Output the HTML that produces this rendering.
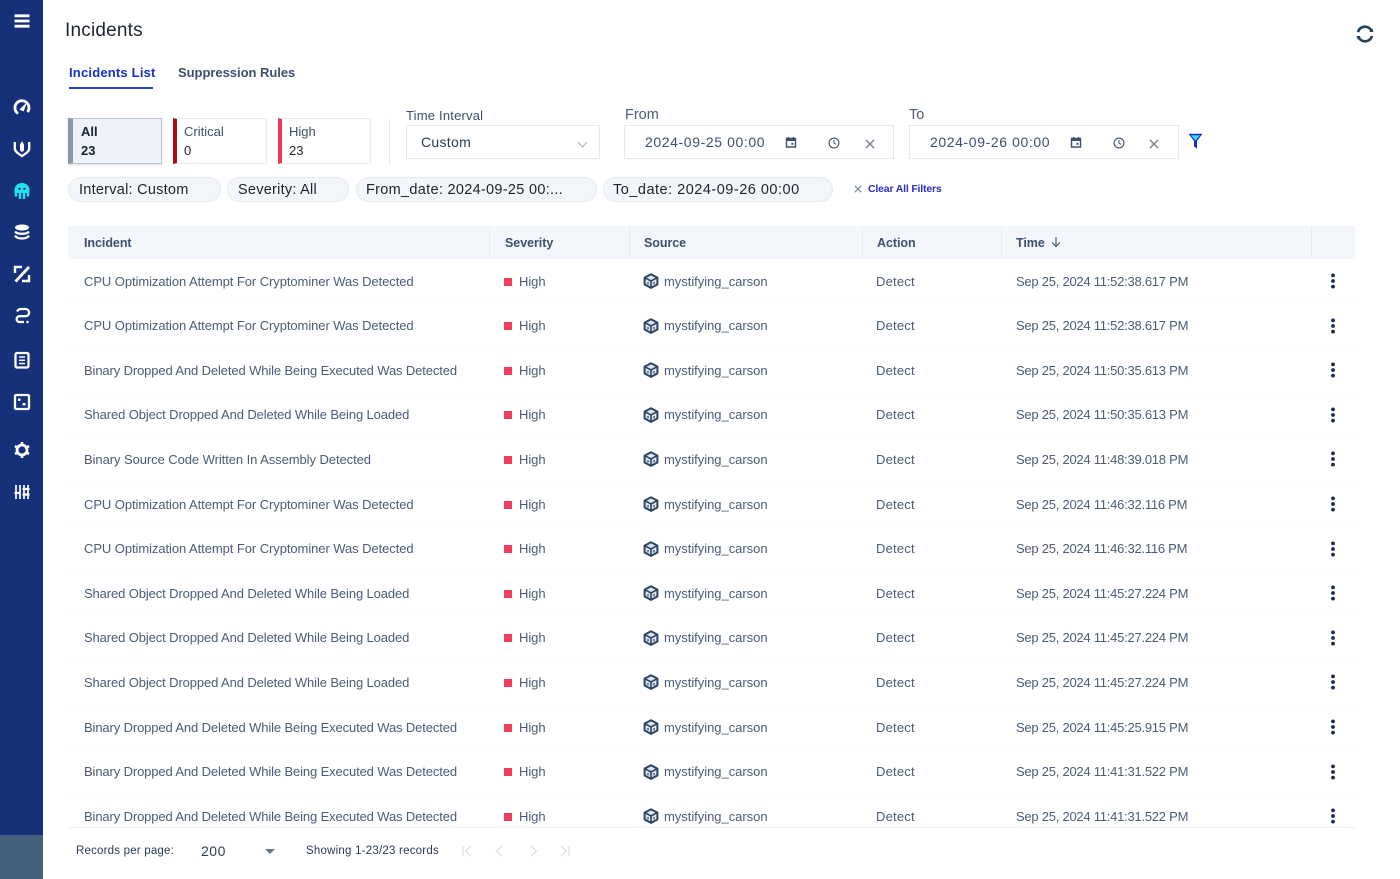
<!DOCTYPE html>
<html lang="en"><head><meta charset="utf-8"><title>Incidents</title>
<style>
*{box-sizing:border-box}
html,body{margin:0;padding:0;width:1400px;height:879px;overflow:hidden;background:#fff;font-family:"Liberation Sans",sans-serif;color:#3d5070}
.a{position:absolute;white-space:nowrap}
#side{position:absolute;left:0;top:0;width:43px;height:879px;background:#16307a}
#sideb{position:absolute;left:0;top:835px;width:43px;height:44px;background:#44607c}
#side svg{position:absolute;left:13px;width:18px;height:18px}
.card{position:absolute;top:118px;height:46px;border:1px solid #e9ecf1;background:#fff;font-size:13px;line-height:19px;padding:3px 0 0 7px;color:#3d5070}
.pill{position:absolute;top:177px;height:25px;border-radius:13px;background:#f2f5f9;border:1px solid #e6eaf0;font-size:14.5px;line-height:24.5px;padding-left:10px;color:#1c2230;letter-spacing:.25px;white-space:nowrap}
.box{position:absolute;top:125px;height:34px;border:1px solid #e4e8ee;background:#fff}
.lb{font-size:13px;color:#3d5070;letter-spacing:.2px}
#thead{position:absolute;left:68px;top:226px;width:1287px;height:33px;background:#f3f7fc}
.th{position:absolute;top:227px;height:31px;width:1px;background:#e6ebf2}
.h{position:absolute;top:236px;font-size:12.5px;font-weight:bold;color:#3d5070;white-space:nowrap;letter-spacing:-.05px}
#tb{position:absolute;left:0;top:259px;width:1400px;height:569px;overflow:hidden}
.r{position:absolute;left:68px;width:1287px;height:44.6px;border-bottom:1px solid #fafbfc;font-size:13px;color:#4a5c79}
.r span{position:absolute;top:14.7px;white-space:nowrap;line-height:16px}
.r .i{left:16px;letter-spacing:-.07px}.r .i.b{letter-spacing:-.123px}.r .i.d{letter-spacing:-.11px}.r .s{left:451px;letter-spacing:-.05px}.r .o{left:596px;letter-spacing:-.03px}.r .c{left:808px;letter-spacing:.2px}.r .t{left:948px;letter-spacing:-.245px}
.r i{position:absolute;left:436px;top:18.5px;width:8px;height:8px;background:#f23d5c}
.r svg.cb{position:absolute;left:575px;top:14px;width:16px;height:16px}
.r svg.m{position:absolute;left:1262px;top:14px;width:6px;height:16px}
</style></head><body>
<svg width="0" height="0" style="position:absolute"><defs>
<symbol id="cube" viewBox="0 0 16 16"><path d="M8 1.2 14.4 4.6V11.5L8 14.9 1.6 11.5V4.6Z" fill="#dfe5ec" stroke="#2c4463" stroke-width="2" stroke-linejoin="round"/><path d="M2 4.8 8 8l6-3.2M8 8v6.600" fill="none" stroke="#2c4463" stroke-width="1.600"/><path d="M4 9h2v2.400H4zM10 9h2v2.400h-2z" fill="#6f8298"/></symbol>
<symbol id="dots" viewBox="0 0 6 16"><circle cx="3" cy="2.400" r="1.900" fill="#1a2a55"/><circle cx="3" cy="8" r="1.900" fill="#1a2a55"/><circle cx="3" cy="13.600" r="1.900" fill="#1a2a55"/></symbol>
<symbol id="cal" viewBox="0 0 12 12"><path d="M1.500 2.500h9v8.500h-9zM3.500 1v2M8.500 1v2" fill="none" stroke="#3d5070" stroke-width="1.400"/><path d="M1.500 2.500h9v2.500h-9z" fill="#3d5070"/><rect x="6.400" y="6.800" width="2" height="2" fill="#3d5070"/></symbol>
<symbol id="clk" viewBox="0 0 12 12"><circle cx="6" cy="6" r="4.900" fill="none" stroke="#3d5070" stroke-width="1.100"/><path d="M6 3v3.200l2 1.100" fill="none" stroke="#3d5070" stroke-width="1"/></symbol>
<symbol id="x" viewBox="0 0 10 10"><path d="M1 1l8 8M9 1l-8 8" fill="none" stroke="#6f7f95" stroke-width="1.300"/></symbol>
</defs></svg>

<div id="side">
<svg style="top:12px" viewBox="0 0 18 18"><path d="M1.500 3.800h15M1.500 9h15M1.500 14.200h15" stroke="#fff" stroke-width="2.800" fill="none"/></svg>
<svg style="top:98px" viewBox="0 0 18 18"><path d="M5 15.500A7 7 0 1 1 14.500 14" fill="none" stroke="#fff" stroke-width="2.800"/><path d="M7 11.500 13.500 5 10.500 13Z" fill="#fff" stroke="#fff" stroke-width=".6"/></svg>
<svg style="top:140px" viewBox="0 0 18 18"><path d="M1.800 2v6.500c0 2.800 3 4.800 7.200 7.500 4.200-2.700 7.200-4.700 7.200-7.500V2" fill="none" stroke="#fff" stroke-width="2.300"/><path d="M9 1 11 4.500V10.500L9 12 7 10.500V4.500Z" fill="#fff"/></svg>
<svg style="top:182px" viewBox="0 0 18 18"><path d="M1.500 11V8a7.500 7 0 0 1 15 0v3Z" fill="#21e3ee"/><path d="M3 10.500v4M7 10.500v6.500M11 10.500v6.500M15 10.500v4" stroke="#21e3ee" stroke-width="2.500"/><circle cx="6.500" cy="6.800" r="1.200" fill="#16307a"/><circle cx="11.500" cy="6.800" r="1.200" fill="#16307a"/></svg>
<svg style="top:223px" viewBox="0 0 18 18"><path d="M9 1.500c4 0 7 1.300 7 3s-3 3-7 3-7-1.300-7-3 3-3 7-3Z" fill="#fff"/><path d="M2 8.500c1 1.500 4 2.300 7 2.300s6-.8 7-2.300M2 12.500c1 2 4 3 7 3s6-1 7-3" fill="none" stroke="#fff" stroke-width="2.300"/></svg>
<svg style="top:265px" viewBox="0 0 18 18"><path d="M2 8V2h7M16 10v6H9" fill="none" stroke="#fff" stroke-width="2.400"/><path d="M2.500 16.500 16 2" stroke="#fff" stroke-width="2.800"/></svg>
<svg style="top:307px" viewBox="0 0 18 18"><path d="M4 4.500C5 2.800 6.500 2 8 2h4.500a3.600 3.600 0 0 1 0 7.200H6.500a2.900 2.900 0 0 0 0 5.800H11" fill="none" stroke="#fff" stroke-width="2.300"/><circle cx="14.500" cy="15" r="1.300" fill="#fff"/></svg>
<svg style="top:351px" viewBox="0 0 18 18"><rect x="2.500" y="2" width="13" height="14.500" rx="1.500" fill="none" stroke="#fff" stroke-width="2.300"/><path d="M6 6h6M6 9.300h6M6 12.500h6" stroke="#fff" stroke-width="1.500"/></svg>
<svg style="top:393px" viewBox="0 0 18 18"><rect x="2" y="2" width="14" height="14" rx="1" fill="none" stroke="#fff" stroke-width="2.300"/><path d="M5 8h2.500V5.500H5zM9.500 12.500h3V10h-3z" fill="#fff"/></svg>
<svg style="top:441px" viewBox="0 0 18 18"><circle cx="9" cy="9" r="5" fill="none" stroke="#fff" stroke-width="2.800"/><path d="M9 1v3M9 14v3M2 5l2.500 1.500M13.500 11.500 16 13M2 13l2.500-1.500M13.500 6.500 16 5" stroke="#fff" stroke-width="2.600"/></svg>
<svg style="top:483px" viewBox="0 0 18 18"><path d="M3 2v14M7 2v14M11 2v14M15 2v14" stroke="#fff" stroke-width="1.700"/><path d="M1.500 10h6M9.500 6h7M9.500 11.500h7" stroke="#fff" stroke-width="2.200"/></svg>
</div>
<div id="sideb"></div>

<div class="a" style="left:65px;top:19px;font-size:19px;line-height:23px;color:#1f2530;letter-spacing:.2px">Incidents</div>
<div class="a" style="left:69px;top:65px;font-size:13px;font-weight:bold;color:#1530c8;letter-spacing:.2px">Incidents List</div>
<div class="a" style="left:69px;top:87px;width:84px;height:2px;background:#2a3fc4"></div>
<div class="a" style="left:178px;top:65px;font-size:13px;font-weight:bold;color:#3d5070;letter-spacing:-.03px">Suppression Rules</div>
<svg class="a" style="left:1355px;top:24px" width="20" height="20" viewBox="0 0 20 20"><path d="M3 8A7.200 7.200 0 0 1 16.300 6.500M17 12A7.200 7.200 0 0 1 3.700 13.500" fill="none" stroke="#24405f" stroke-width="2.700"/><path d="M18.500 8 14.300 8 17.200 4.300ZM1.500 12l4.200 0-2.900 3.700Z" fill="#24405f"/></svg>

<div class="card" style="left:68px;width:94px;background:#eef2fb;border:1px solid #bcc4d2;border-left:5px solid #8d97a8;color:#1c2230;font-weight:bold;padding-left:8px;box-shadow:0 1px 2px #d5d9e0">All<br>23</div>
<div class="card" style="left:173px;width:94px;border-left:4px solid #a90f14">Critical<br><span style="color:#1c2230">0</span></div>
<div class="card" style="left:278px;width:93px;border-left:4px solid #f2385a">High<br><span style="color:#1c2230">23</span></div>
<div class="a" style="left:389px;top:119px;width:1px;height:46px;background:#e4e7ec"></div>

<div class="a lb" style="left:406px;top:108px">Time Interval</div>
<div class="box" style="left:406px;width:194px"></div>
<div class="a" style="left:421px;top:134px;font-size:14px;color:#2c3c55;letter-spacing:.3px">Custom</div>
<svg class="a" style="left:577px;top:141px" width="11" height="7" viewBox="0 0 11 7"><path d="M1 1l4.500 5L10 1" fill="none" stroke="#a5afbc" stroke-width="1"/></svg>

<div class="a" style="left:625px;top:107px;font-size:14.5px;color:#4a5c79">From</div>
<div class="box" style="left:624px;width:270px"></div>
<div class="a" style="left:645px;top:134px;font-size:14px;color:#3d5070;letter-spacing:.6px">2024-09-25 00:00</div>
<svg class="a" style="left:785px;top:136px" width="12" height="12"><use href="#cal"/></svg>
<svg class="a" style="left:828px;top:136.500px" width="12" height="12"><use href="#clk"/></svg>
<svg class="a" style="left:865px;top:139px" width="10" height="10"><use href="#x"/></svg>

<div class="a" style="left:909px;top:107px;font-size:14.5px;color:#4a5c79">To</div>
<div class="box" style="left:909px;width:270px"></div>
<div class="a" style="left:930px;top:134px;font-size:14px;color:#3d5070;letter-spacing:.6px">2024-09-26 00:00</div>
<svg class="a" style="left:1070px;top:136px" width="12" height="12"><use href="#cal"/></svg>
<svg class="a" style="left:1112.500px;top:136.500px" width="12" height="12"><use href="#clk"/></svg>
<svg class="a" style="left:1149px;top:139px" width="10" height="10"><use href="#x"/></svg>
<svg class="a" style="left:1188px;top:133px" width="15" height="16" viewBox="0 0 15 16"><path d="M.5 .8h14L9 8V15.500L6 13.500V8Z" fill="#1a2bd0"/><path d="M3 2.300h9L7.500 7.600Z" fill="#28e0ee"/></svg>

<div class="pill" style="left:68px;width:153px">Interval: Custom</div>
<div class="pill" style="left:227px;width:122px">Severity: All</div>
<div class="pill" style="left:356px;width:241px;padding-left:9px;letter-spacing:.3px">From_date: 2024-09-25 00:...</div>
<div class="pill" style="left:603px;width:230px;padding-left:9px;letter-spacing:.5px">To_date: 2024-09-26 00:00</div>
<svg class="a" style="left:854px;top:185px" width="8" height="8"><use href="#x"/></svg>
<div class="a" style="left:868px;top:183px;font-size:10.5px;font-weight:bold;color:#2a2fc0;letter-spacing:-.18px">Clear All Filters</div>

<div id="thead"></div>
<div class="th" style="left:489px"></div><div class="th" style="left:629px"></div><div class="th" style="left:862px"></div><div class="th" style="left:1001px"></div><div class="th" style="left:1311px"></div>
<div class="h" style="left:84px">Incident</div>
<div class="h" style="left:505px">Severity</div>
<div class="h" style="left:644px">Source</div>
<div class="h" style="left:877px">Action</div>
<div class="h" style="left:1016px">Time</div>
<svg class="a" style="left:1050px;top:236px" width="12" height="12" viewBox="0 0 12 12"><path d="M6 1v9.500M2 6.500l4 4 4-4" fill="none" stroke="#3d5070" stroke-width="1.100"/></svg>

<div id="tb">
<div class="r" style="top:0"><span class="i">CPU Optimization Attempt For Cryptominer Was Detected</span><i></i><span class="s">High</span><svg class="cb"><use href="#cube"/></svg><span class="o">mystifying_carson</span><span class="c">Detect</span><span class="t">Sep 25, 2024 11:52:38.617 PM</span><svg class="m"><use href="#dots"/></svg></div>
<div class="r" style="top:44.6px"><span class="i">CPU Optimization Attempt For Cryptominer Was Detected</span><i></i><span class="s">High</span><svg class="cb"><use href="#cube"/></svg><span class="o">mystifying_carson</span><span class="c">Detect</span><span class="t">Sep 25, 2024 11:52:38.617 PM</span><svg class="m"><use href="#dots"/></svg></div>
<div class="r" style="top:89.2px"><span class="i b">Binary Dropped And Deleted While Being Executed Was Detected</span><i></i><span class="s">High</span><svg class="cb"><use href="#cube"/></svg><span class="o">mystifying_carson</span><span class="c">Detect</span><span class="t">Sep 25, 2024 11:50:35.613 PM</span><svg class="m"><use href="#dots"/></svg></div>
<div class="r" style="top:133.8px"><span class="i d">Shared Object Dropped And Deleted While Being Loaded</span><i></i><span class="s">High</span><svg class="cb"><use href="#cube"/></svg><span class="o">mystifying_carson</span><span class="c">Detect</span><span class="t">Sep 25, 2024 11:50:35.613 PM</span><svg class="m"><use href="#dots"/></svg></div>
<div class="r" style="top:178.4px"><span class="i">Binary Source Code Written In Assembly Detected</span><i></i><span class="s">High</span><svg class="cb"><use href="#cube"/></svg><span class="o">mystifying_carson</span><span class="c">Detect</span><span class="t">Sep 25, 2024 11:48:39.018 PM</span><svg class="m"><use href="#dots"/></svg></div>
<div class="r" style="top:223px"><span class="i">CPU Optimization Attempt For Cryptominer Was Detected</span><i></i><span class="s">High</span><svg class="cb"><use href="#cube"/></svg><span class="o">mystifying_carson</span><span class="c">Detect</span><span class="t">Sep 25, 2024 11:46:32.116 PM</span><svg class="m"><use href="#dots"/></svg></div>
<div class="r" style="top:267.6px"><span class="i">CPU Optimization Attempt For Cryptominer Was Detected</span><i></i><span class="s">High</span><svg class="cb"><use href="#cube"/></svg><span class="o">mystifying_carson</span><span class="c">Detect</span><span class="t">Sep 25, 2024 11:46:32.116 PM</span><svg class="m"><use href="#dots"/></svg></div>
<div class="r" style="top:312.2px"><span class="i d">Shared Object Dropped And Deleted While Being Loaded</span><i></i><span class="s">High</span><svg class="cb"><use href="#cube"/></svg><span class="o">mystifying_carson</span><span class="c">Detect</span><span class="t">Sep 25, 2024 11:45:27.224 PM</span><svg class="m"><use href="#dots"/></svg></div>
<div class="r" style="top:356.8px"><span class="i d">Shared Object Dropped And Deleted While Being Loaded</span><i></i><span class="s">High</span><svg class="cb"><use href="#cube"/></svg><span class="o">mystifying_carson</span><span class="c">Detect</span><span class="t">Sep 25, 2024 11:45:27.224 PM</span><svg class="m"><use href="#dots"/></svg></div>
<div class="r" style="top:401.4px"><span class="i d">Shared Object Dropped And Deleted While Being Loaded</span><i></i><span class="s">High</span><svg class="cb"><use href="#cube"/></svg><span class="o">mystifying_carson</span><span class="c">Detect</span><span class="t">Sep 25, 2024 11:45:27.224 PM</span><svg class="m"><use href="#dots"/></svg></div>
<div class="r" style="top:446px"><span class="i b">Binary Dropped And Deleted While Being Executed Was Detected</span><i></i><span class="s">High</span><svg class="cb"><use href="#cube"/></svg><span class="o">mystifying_carson</span><span class="c">Detect</span><span class="t">Sep 25, 2024 11:45:25.915 PM</span><svg class="m"><use href="#dots"/></svg></div>
<div class="r" style="top:490.6px"><span class="i b">Binary Dropped And Deleted While Being Executed Was Detected</span><i></i><span class="s">High</span><svg class="cb"><use href="#cube"/></svg><span class="o">mystifying_carson</span><span class="c">Detect</span><span class="t">Sep 25, 2024 11:41:31.522 PM</span><svg class="m"><use href="#dots"/></svg></div>
<div class="r" style="top:535.2px"><span class="i b">Binary Dropped And Deleted While Being Executed Was Detected</span><i></i><span class="s">High</span><svg class="cb"><use href="#cube"/></svg><span class="o">mystifying_carson</span><span class="c">Detect</span><span class="t">Sep 25, 2024 11:41:31.522 PM</span><svg class="m"><use href="#dots"/></svg></div>
</div>
<div class="a" style="left:68px;top:827px;width:1288px;height:1px;background:#eceff3"></div>

<div class="a" style="left:76px;top:845px;font-size:11.5px;color:#2c3c55;letter-spacing:.2px">Records per page:</div>
<div class="a" style="left:201px;top:843px;font-size:14px;color:#2c3c55;letter-spacing:.5px">200</div>
<svg class="a" style="left:265px;top:849px" width="10" height="5"><path d="M0 0h10L5 5Z" fill="#6b7584"/></svg>
<div class="a" style="left:306px;top:845px;font-size:11.5px;color:#2c3c55;letter-spacing:.22px">Showing 1-23/23 records</div>
<svg class="a" style="left:460px;top:844px" width="115" height="14" viewBox="0 0 115 14" fill="none" stroke="#d3d8df" stroke-width="1"><path d="M3 2v10M11 2 5.500 7 11 12M42 2 36.500 7 42 12M71 2 76.500 7 71 12M101 2 106.500 7 101 12M109 2v10"/></svg>
</body></html>
